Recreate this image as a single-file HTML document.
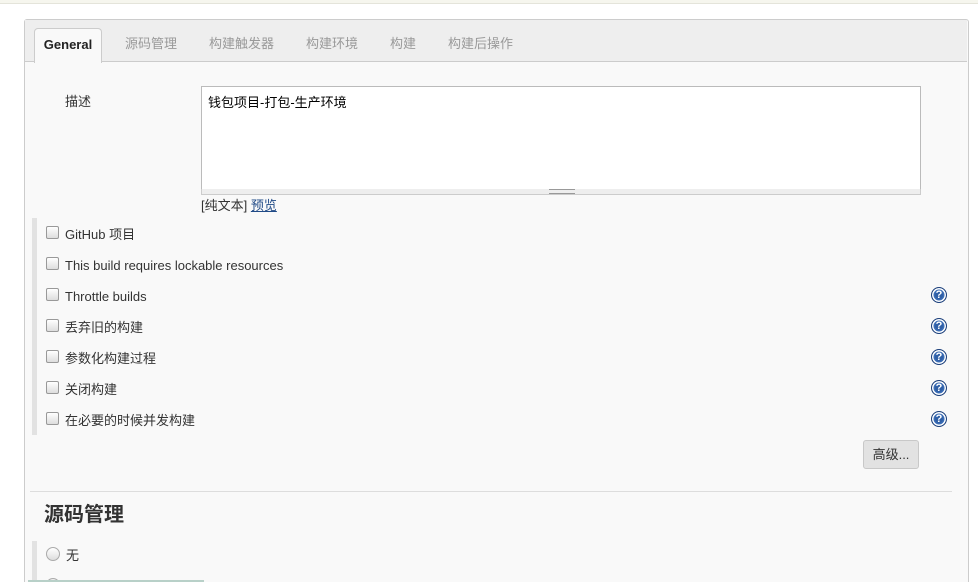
<!DOCTYPE html>
<html style="overflow:hidden;height:582px"><head><meta charset="utf-8"><style>
body{margin:0;width:978px;height:582px;overflow:hidden;background:#fff;font-family:"Liberation Sans","Noto Sans CJK SC",sans-serif;font-size:13px;color:#333;position:relative}
.abs{position:absolute}
.topline{left:0;top:0;width:978px;height:3px;background:#f6f6ee;border-bottom:1px solid #e4e4da}
.panel{left:24px;top:19px;width:943px;height:580px;background:#f9f9f9;border:1px solid #ccc;border-radius:3px}
.tabbar{left:25px;top:20px;width:942px;height:41px;background:#eee;border-bottom:1px solid #ccc}
.tab{top:36px;color:#999;font-size:13px;line-height:15px}
.active{left:34px;top:28px;width:66px;height:34px;background:#f9f9f9;border:1px solid #ccc;border-bottom:none;border-radius:4px 4px 0 0;text-align:center;line-height:31px;font-weight:bold;color:#222;font-size:13px}
.ta{left:201px;top:86px;width:718px;height:102px;background:#fff;border:1px solid #bbb}
.grip{left:201px;top:189px;width:718px;height:5px;background:#eee;border:1px solid #ccc;border-top:none}
.cb{width:11px;height:11px;border:1px solid #999;border-radius:2px;background:linear-gradient(#fff,#ddd)}
.bar{left:32px;width:5px;background:#e2e2e2}
.help{width:14px;height:14px;border-radius:50%;background:#2f5fa6;border:1px solid #1c3f7a;color:#fff;font-size:11px;font-weight:bold;text-align:center;line-height:14px;box-shadow:inset 0 0 0 1.5px #fff, inset 0 0 0 3px #3a6cb5}
.lbl{left:65px;line-height:15px}
</style></head><body>
<div class="abs topline"></div>
<div class="abs panel"></div>
<div class="abs tabbar"></div>
<div class="abs active">General</div>
<div class="abs tab" style="left:125px">源码管理</div>
<div class="abs tab" style="left:209px">构建触发器</div>
<div class="abs tab" style="left:306px">构建环境</div>
<div class="abs tab" style="left:390px">构建</div>
<div class="abs tab" style="left:448px">构建后操作</div>
<div class="abs" style="left:65px;top:91px">描述</div>
<div class="abs ta"><div style="padding:5px 0 0 6px;color:#000">钱包项目-打包-生产环境</div></div>
<div class="abs grip"><div style="position:absolute;left:347px;top:0;width:26px;height:3px;border-top:1px solid #999;border-bottom:1px solid #999"></div></div>
<div class="abs" style="left:201px;top:195px">[纯文本] <span style="color:#204a87;text-decoration:underline">预览</span></div>
<div class="abs bar" style="top:218px;height:217px"></div>
<div class="abs cb" style="left:46px;top:226px"></div><div class="abs lbl" style="top:227px">GitHub 项目</div>
<div class="abs cb" style="left:46px;top:257px"></div><div class="abs lbl" style="top:258px">This build requires lockable resources</div>
<div class="abs cb" style="left:46px;top:288px"></div><div class="abs lbl" style="top:289px">Throttle builds</div>
<div class="abs cb" style="left:46px;top:319px"></div><div class="abs lbl" style="top:320px">丢弃旧的构建</div>
<div class="abs cb" style="left:46px;top:350px"></div><div class="abs lbl" style="top:351px">参数化构建过程</div>
<div class="abs cb" style="left:46px;top:381px"></div><div class="abs lbl" style="top:382px">关闭构建</div>
<div class="abs cb" style="left:46px;top:412px"></div><div class="abs lbl" style="top:413px">在必要的时候并发构建</div>
<div class="abs help" style="left:931px;top:287px">?</div>
<div class="abs help" style="left:931px;top:318px">?</div>
<div class="abs help" style="left:931px;top:349px">?</div>
<div class="abs help" style="left:931px;top:380px">?</div>
<div class="abs help" style="left:931px;top:411px">?</div>
<div class="abs" style="left:863px;top:440px;width:54px;height:27px;background:#e2e2e2;border:1px solid #c8c8c8;border-radius:3px;text-align:center;line-height:27px;font-size:13px">高级...</div>
<div class="abs" style="left:30px;top:491px;width:922px;height:1px;background:#ddd"></div>
<div class="abs" style="left:44px;top:498px;font-size:20px;font-weight:bold;color:#333">源码管理</div>
<div class="abs bar" style="top:541px;height:45px"></div>
<div class="abs" style="left:46px;top:547px;width:12px;height:12px;border-radius:50%;border:1px solid #aaa;background:linear-gradient(#fff,#ddd)"></div>
<div class="abs lbl" style="left:66px;top:548px">无</div>
<div class="abs" style="left:46px;top:578px;width:12px;height:12px;border-radius:50%;border:1px solid #aaa;background:#eee"></div>
<div class="abs" style="left:28px;top:580px;width:176px;height:2px;background:#b8d0c8"></div>
</body></html>
